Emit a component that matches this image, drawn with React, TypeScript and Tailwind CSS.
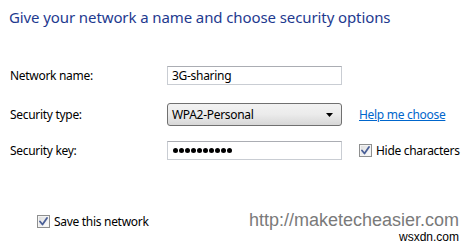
import React from "react";

const font = { fontFamily: '"Noto Sans", "Open Sans", sans-serif' };

function Check() {
  return (
    <span className="inline-flex h-[13px] w-[13px] shrink-0 items-center justify-center border border-[#8e8f8f] bg-gradient-to-br from-[#dcdcdc] to-[#ffffff] shadow-[inset_0_0_0_1px_#f4f4f4]">
      <svg width="9" height="9" viewBox="0 0 9 9">
        <path d="M1 4.5 L3.5 7.5 L8 1" fill="none" stroke="#4a5f97" strokeWidth="1.8" strokeLinejoin="round" strokeLinecap="round" />
      </svg>
    </span>
  );
}

export default function App() {
  return (
    <div className="w-[471px] h-[245px] bg-white overflow-hidden flex flex-col text-[12px] text-black" style={font}>
      <div className="pl-[9px] pt-[6px] h-[60px] text-[15px] leading-[22px] text-[#1e3a8f] tracking-[-0.1px]">
        Give your network a name and choose security options
      </div>
      <div className="grid grid-cols-[140px_175px_auto] gap-x-[17px] pl-[10px] items-center whitespace-nowrap tracking-[-0.3px]">
        <div className="mt-[6px] h-[19px] flex items-center">Network name:</div>
        <div className="mt-[6px] h-[19px] border border-[#c9cdd3] border-t-[#abadb3] bg-white flex items-center pl-[4px]">3G-sharing</div>
        <div className="mt-[6px]" />

        <div className="mt-[18px] h-[23px] flex items-center">Security type:</div>
        <div className="mt-[18px] h-[23px] rounded-[3px] border border-[#707070] bg-gradient-to-b from-[#f2f2f2] via-[#ebebeb] to-[#d7d7d7] flex items-center justify-between pl-[4px] pr-[8px]">
          <span>WPA2-Personal</span>
          <svg width="7" height="4" viewBox="0 0 7 4"><path d="M0 0 H7 L3.5 4 Z" fill="#000" /></svg>
        </div>
        <div className="mt-[18px] h-[23px] flex items-center">
          <span className="text-[#0066cc] underline">Help me choose</span>
        </div>

        <div className="mt-[15px] h-[19px] flex items-center">Security key:</div>
        <div className="mt-[15px] h-[19px] border border-[#c9cdd3] border-t-[#abadb3] bg-white flex items-center pl-[5px] gap-[1px]">
          {Array.from({ length: 10 }).map((_, i) => (
            <span key={i} className="h-[5px] w-[5px] rounded-full bg-black" />
          ))}
        </div>
        <div className="mt-[15px] h-[19px] flex items-center gap-[4px]">
          <Check />
          <span>Hide characters</span>
        </div>
      </div>
      <div className="mt-[50px] flex items-start justify-between pl-[37px] pr-[12px]">
        <div className="flex items-center gap-[4px] mt-[2px] h-[19px] tracking-[-0.3px]">
          <Check />
          <span>Save this network</span>
        </div>
        <div className="flex flex-col items-end" style={{ fontFamily: '"Liberation Sans", Arial, sans-serif' }}>
          <span className="text-[18px] leading-[20px] text-[#7a7a7a]">http://maketecheasier.com</span>
          <span className="text-[12px] leading-[14px] text-black">wsxdn.com</span>
        </div>
      </div>
    </div>
  );
}
